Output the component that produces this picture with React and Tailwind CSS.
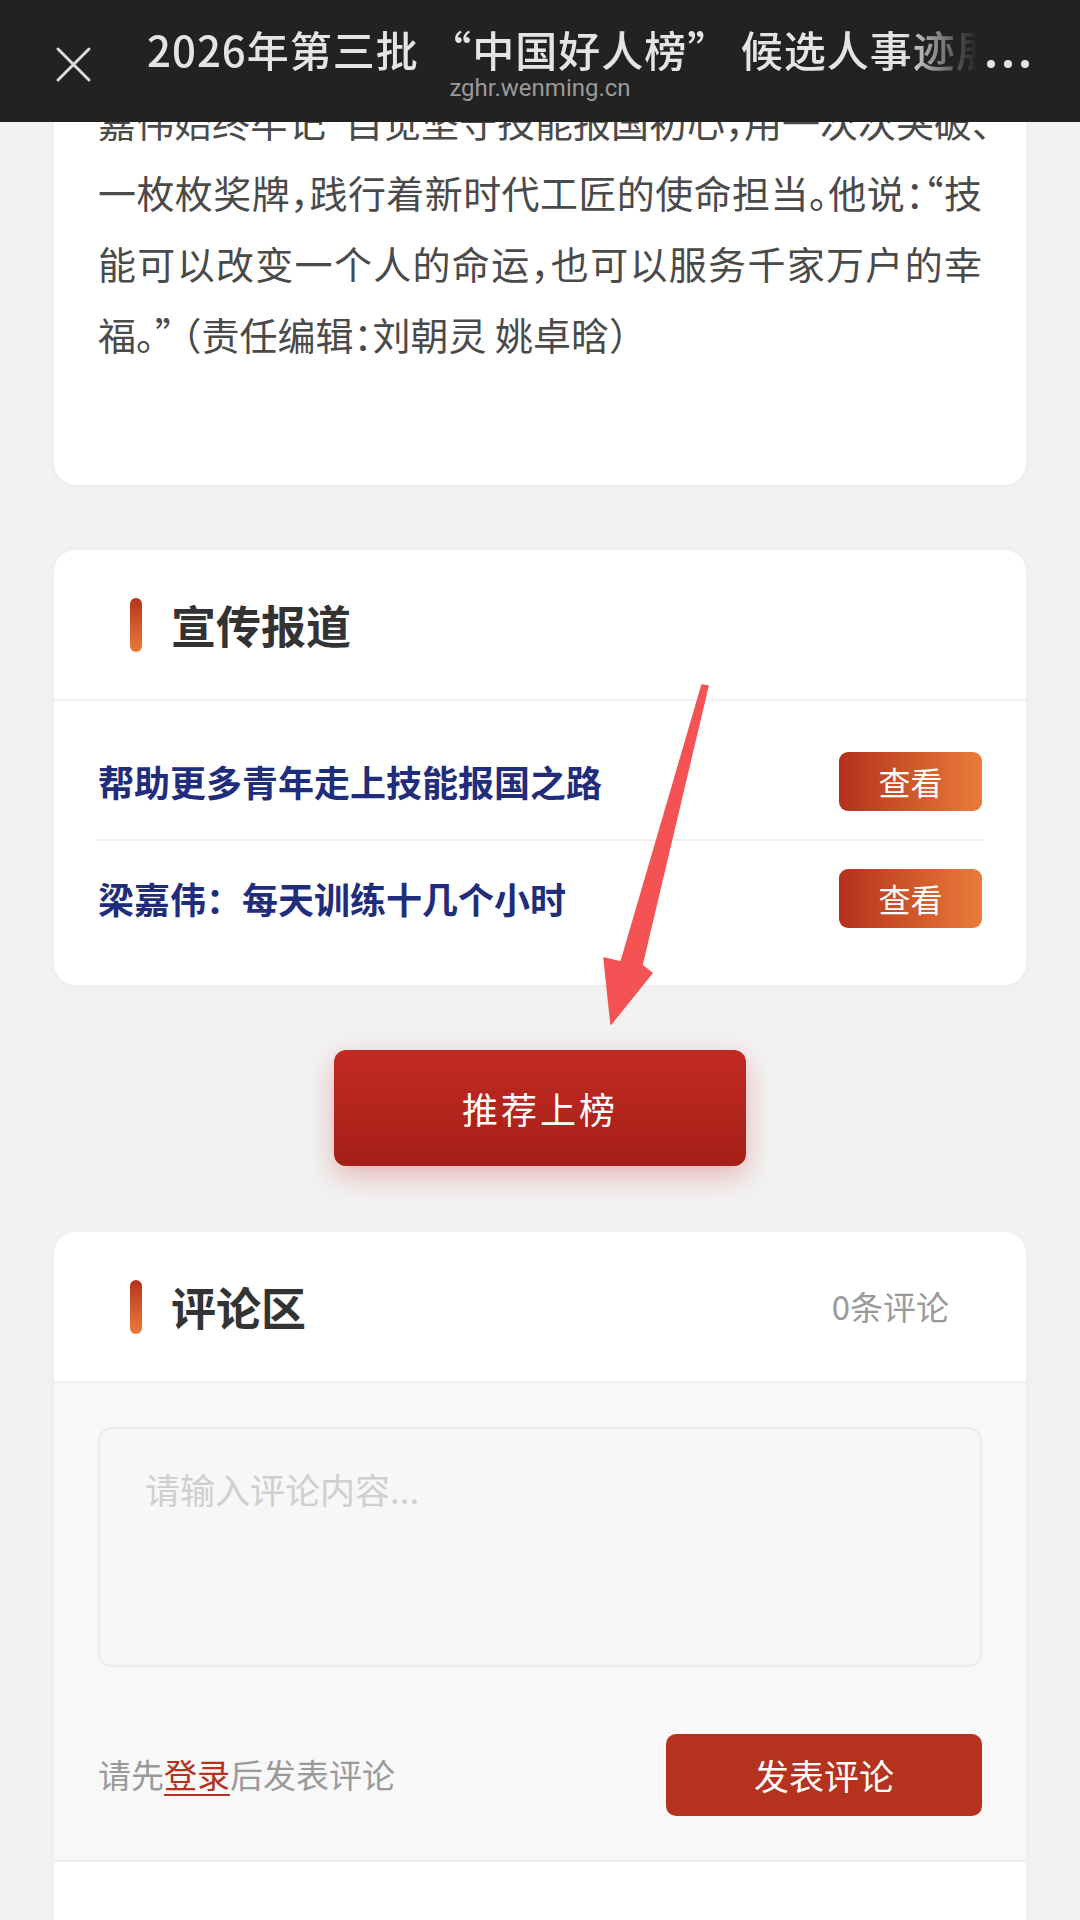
import React from 'react';

const FONT = "font-['Noto_Sans_CJK_SC','Noto_Sans',sans-serif]";

const BODY_LINES = [
  '嘉伟始终牢记“自觉坚守技能报国初心，用一次次突破、',
  '一枚枚奖牌，践行着新时代工匠的使命担当。他说：“技',
  '能可以改变一个人的命运，也可以服务千家万户的幸',
];

const REPORTS = ['帮助更多青年走上技能报国之路', '梁嘉伟：每天训练十几个小时'];

const SectionHead = ({ title, extra }) => (
  <div className="h-[151px] flex items-center justify-between pl-[76px] pr-[77px] border-b-2 border-[#f0f0f0]">
    <div className="flex items-center gap-[29px]">
      <div className="w-[12px] h-[54px] rounded-full bg-linear-to-b from-[#b5321d] to-[#ea7b3b]" />
      <h2 className="text-[45px] leading-none font-bold text-[#333]">{title}</h2>
    </div>
    {extra && <span className="text-[33px] text-[#9a9a9a]">{extra}</span>}
  </div>
);

const Header = () => (
  <div className="absolute inset-x-0 top-0 h-[122px] bg-[#222222] flex z-10">
    <div className="w-[147px] pl-[55px] flex items-center pt-[6px]">
      <svg width="37" height="37" viewBox="0 0 37 37" fill="none" stroke="#dcdcdc" strokeWidth="3" strokeLinecap="round">
        <path d="M3 3 L34 34 M34 3 L3 34" />
      </svg>
    </div>
    <div className="w-[786px] flex flex-col items-center pt-[27px]">
      <div className="w-[830px] self-start overflow-hidden whitespace-nowrap text-[42px] leading-[44px] tracking-[1px] text-[#e4e4e4] font-medium [mask-image:linear-gradient(to_right,black_91%,transparent_100%)]">
        2026年第三批 “中国好人榜” 候选人事迹展示
      </div>
      <div className="mt-[3px] text-[24px] leading-[28px] text-[#9a9a9a] font-['Roboto','Liberation_Sans',sans-serif]">
        zghr.wenming.cn
      </div>
    </div>
    <div className="ml-auto pr-[51px] flex items-center gap-[9px] pt-[6px]">
      <span className="w-[8px] h-[8px] rounded-full bg-[#e2e2e2]" />
      <span className="w-[8px] h-[8px] rounded-full bg-[#e2e2e2]" />
      <span className="w-[8px] h-[8px] rounded-full bg-[#e2e2e2]" />
    </div>
  </div>
);

export default function App() {
  return (
    <div className={`relative w-[1080px] h-[1920px] overflow-hidden bg-[#f2f2f2] ${FONT}`}>
      <Header />

      <div className="px-[54px] flex flex-col">
        {/* article tail */}
        <div className="bg-white rounded-b-[22px] pt-[85px] pb-[116px] px-[44px] text-[38px] leading-[71px] text-[#4a4a4a] [font-feature-settings:'halt'] shadow-[0_2px_12px_rgba(0,0,0,0.03)]">
          {BODY_LINES.map((l) => (
            <div key={l} className="text-justify [text-align-last:justify] whitespace-nowrap">{l}</div>
          ))}
          <div>福。” （责任编辑：刘朝灵 姚卓晗）</div>
        </div>

        {/* reports */}
        <div className="mt-[65px] bg-white rounded-[22px] overflow-hidden shadow-[0_2px_12px_rgba(0,0,0,0.03)]">
          <SectionHead title="宣传报道" />
          <div className="px-[44px] pt-[22px] pb-[30px]">
            {REPORTS.map((r, i) => (
              <div key={r} className={`h-[116px] flex items-center justify-between ${i > 0 ? 'border-t-2 border-[#efefef]' : ''}`}>
                <span className="text-[36px] font-bold text-[#1f2d7b]">{r}</span>
                <button className="w-[143px] h-[59px] rounded-[9px] bg-linear-to-r from-[#b3301c] to-[#ea7b3a] text-white text-[32px] leading-none">
                  查看
                </button>
              </div>
            ))}
          </div>
        </div>

        <button className="mt-[65px] mx-auto w-[412px] h-[116px] rounded-[12px] bg-linear-to-b from-[#c22b23] to-[#a51f17] text-white text-[36px] tracking-[3px] shadow-[0_10px_28px_rgba(200,40,30,0.3)]">
          推荐上榜
        </button>

        {/* comments */}
        <div className="mt-[66px] bg-white rounded-t-[22px] overflow-hidden shadow-[0_2px_12px_rgba(0,0,0,0.03)]">
          <SectionHead title="评论区" extra="0条评论" />
          <div className="bg-[#f8f8f8] px-[44px] pt-[44px] pb-[44px]">
            <textarea
              className="block w-full h-[240px] resize-none rounded-[14px] border-2 border-[#ececec] bg-[#f7f7f7] px-[45px] pt-[36px] text-[35px] leading-[48px] outline-none placeholder:text-[#cfcfcf]"
              placeholder="请输入评论内容..."
            />
            <div className="mt-[67px] flex items-center justify-between">
              <p className="text-[33px] text-[#9a9a9a]">
                请先<span className="text-[#b5321e] underline underline-offset-[6px] decoration-2">登录</span>后发表评论
              </p>
              <button className="w-[316px] h-[82px] rounded-[10px] bg-[#b4321e] text-white text-[35px]">
                发表评论
              </button>
            </div>
          </div>
          <div className="h-[100px] border-t-2 border-[#efefef] bg-white" />
        </div>
      </div>

      {/* annotation arrow */}
      <svg className="absolute left-0 top-0 pointer-events-none" width="1080" height="1920">
        <polygon
          points="702,685 708,686 642,965 652,973 611,1024 604,958 621,962"
          fill="#f55353"
          stroke="#f55353"
          strokeWidth="1.5"
          strokeLinejoin="round"
        />
      </svg>
    </div>
  );
}
